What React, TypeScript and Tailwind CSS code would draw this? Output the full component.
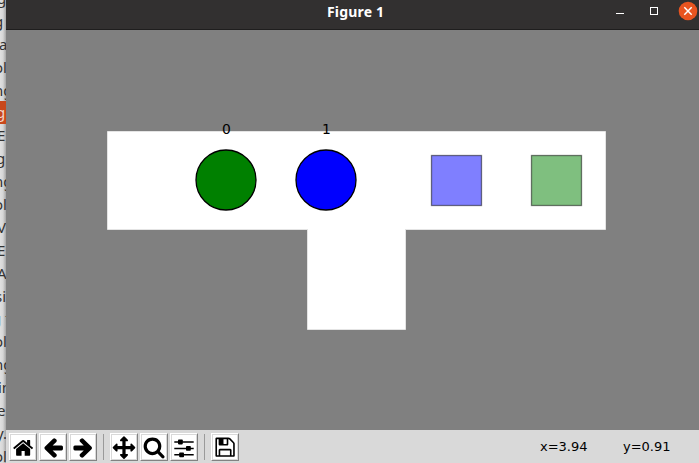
import React from "react";

const lines: { text: string; shift: string; hot?: boolean }[] = [
  { text: "g", shift: "-ml-[3px]" },
  { text: "g", shift: "-ml-[6px]" },
  { text: "a", shift: "-ml-[1px]" },
  { text: "ol", shift: "-ml-[6px]" },
  { text: "ng", shift: "-ml-[6px]" },
  { text: "g", shift: "-ml-[4px]", hot: true },
  { text: "E", shift: "-ml-[3px]" },
  { text: "g", shift: "-ml-[4px]" },
  { text: "ng", shift: "-ml-[6px]" },
  { text: "ol", shift: "-ml-[6px]" },
  { text: "V", shift: "-ml-[3px]" },
  { text: "E", shift: "-ml-[3px]" },
  { text: "A", shift: "-ml-[3px]" },
  { text: "si", shift: "-ml-[5px]" },
  { text: "g t", shift: "-ml-[8px]" },
  { text: "ol", shift: "-ml-[6px]" },
  { text: "ng", shift: "-ml-[6px]" },
  { text: "in", shift: "-ml-[2px]" },
  { text: "e", shift: "-ml-[3px]" },
  { text: "y.", shift: "-ml-[4px]" },
  { text: "ol", shift: "-ml-[6px]" },
];

function Background() {
  return (
    <div className="w-[6px] shrink-0 overflow-hidden bg-gradient-to-r from-[#e0e0e0] via-[#d6d6d6] to-[#a4a4a4] font-['Noto_Sans',sans-serif] text-[15px] leading-[22.9px] text-[#333]">
      <div className="-mt-[13px]">
        {lines.map((l, i) => (
          <div key={i} className={l.hot ? "h-[22.9px] bg-[#c9481b] text-[#f3d5ca]" : "h-[22.9px]"}>
            <span className={"block whitespace-nowrap " + l.shift}>{l.text}</span>
          </div>
        ))}
      </div>
    </div>
  );
}

function TitleBar() {
  return (
    <div className="flex h-[30px] shrink-0 border-b border-[#1f1e1e] bg-[#323030]">
      <div className="w-[321px] shrink-0" />
      <div className="w-[287px] shrink-0 pt-[2px] font-['Noto_Sans',sans-serif] text-[14px] leading-[20px] font-bold text-white">
        <svg className="block overflow-visible" width="58" height="20">
          <text x="0" y="15" textLength="57" fill="currentColor">Figure 1</text>
        </svg>
      </div>
      <svg className="block" width="85" height="29" fill="none" stroke="#fff">
        <path d="M2 13.5h8" />
        <rect x="36.5" y="7.5" width="7" height="7" />
        <circle cx="74" cy="11" r="9.3" fill="#e95420" stroke="none" />
        <path d="M70.3 7.3l7.4 7.4M77.7 7.3l-7.4 7.4" strokeWidth="1.5" />
      </svg>
    </div>
  );
}

function Plot() {
  return (
    <svg className="block shrink-0 bg-[#808080] font-['DejaVu_Sans',sans-serif] text-[13.9px]" width="693" height="400">
      <path d="M101.5 101.5H599.5V199.5H399.5V299.5H301.5V199.5H101.5Z" fill="#fff" stroke="#e4e4e4" />
      <g stroke="#000" strokeWidth="1.3">
        <circle cx="220" cy="150" r="30" fill="#008000" />
        <circle cx="320" cy="150" r="30" fill="#00f" />
      </g>
      <g stroke="#000" strokeWidth="1.3" strokeOpacity="0.5" fillOpacity="0.5">
        <rect x="425.5" y="125.5" width="50" height="50" fill="#00f" />
        <rect x="525.5" y="125.5" width="50" height="50" fill="#008000" />
      </g>
      <g textAnchor="middle">
        <text x="220.3" y="104">0</text>
        <text x="320.3" y="104">1</text>
      </g>
    </svg>
  );
}

function ToolButton({ children }: { children: React.ReactNode }) {
  return (
    <div className="h-[28px] w-[28px] shrink-0 border border-t-white border-r-[#828282] border-b-[#828282] border-l-white bg-white">
      <svg className="block border border-[#d9d9d9]" width="26" height="26" viewBox="1 1 24 24">{children}</svg>
    </div>
  );
}

function Separator() {
  return <div className="mt-px h-[26px] w-px shrink-0 bg-[#9a9a9a]" />;
}

function Toolbar() {
  return (
    <div className="flex h-[33px] shrink-0 bg-[#d9d9d9] pt-[3px] pl-[3px]">
      <div className="flex w-[94px] gap-[2px]">
        <ToolButton>
          <path transform="translate(2.2 2.9) scale(.0122)" d="M1472 992v480q0 26-19 45t-45 19h-384v-384h-256v384h-384q-26 0-45-19t-19-45v-480q0-1 .5-3t.5-3l575-474 575 474q1 2 1 6zm223-69l-62 74q-8 9-21 11h-3q-13 0-21-7l-692-577-692 577q-12 8-24 7-13-2-21-11l-62-74q-8-10-7-23.5t11-21.5l719-599q32-26 76-26t76 26l244 204v-195q0-14 9-23t23-9h192q14 0 23 9t9 23v408l219 182q10 8 11 21.5t-7 23.5z" />
        </ToolButton>
        <ToolButton>
          <path transform="translate(2 1.9) scale(.0126)" d="M1664 896v128q0 53-32.5 90.5t-84.5 37.5h-704l293 294q38 36 38 90t-38 90l-75 76q-37 37-90 37-52 0-91-37l-651-652q-37-37-37-90 0-52 37-91l651-650q38-38 91-38 52 0 90 38l75 74q38 38 38 91t-38 91l-293 293h704q52 0 84.5 37.5t32.5 90.5z" />
        </ToolButton>
        <ToolButton>
          <path transform="translate(1.8 1.9) scale(.0126)" d="M1600 960q0 54-37 91l-651 651q-39 37-91 37-51 0-90-37l-75-75q-38-38-38-91t38-91l293-293h-704q-52 0-84.5-37.5t-32.5-90.5v-128q0-53 32.5-90.5t84.5-37.5h704l-293-294q-38-36-38-90t38-90l75-75q38-38 90-38 53 0 91 38l651 651q37 35 37 90z" />
        </ToolButton>
      </div>
      <Separator />
      <div className="ml-[6px] flex w-[94px] gap-[2px]">
        <ToolButton>
          <path transform="translate(1.7 2.3) scale(.0126)" d="M1792 896q0 26-19 45l-256 256q-19 19-45 19t-45-19-19-45v-128h-384v384h128q26 0 45 19t19 45-19 45l-256 256q-19 19-45 19t-45-19l-256-256q-19-19-19-45t19-45 45-19h128v-384h-384v128q0 26-19 45t-45 19-45-19l-256-256q-19-19-19-45t19-45l256-256q19-19 45-19t45 19 19 45v128h384v-384h-128q-26 0-45-19t-19-45 19-45l256-256q19-19 45-19t45 19l256 256q19 19 19 45t-19 45-45 19h-128v384h384v-128q0-26 19-45t45-19 45 19l256 256q19 19 19 45z" />
        </ToolButton>
        <ToolButton>
          <path transform="translate(1.8 1.8) scale(.0126)" d="M1216 832q0-185-131.5-316.5t-316.5-131.5-316.5 131.5-131.5 316.5 131.5 316.5 316.5 131.5 316.5-131.5 131.5-316.5zm512 832q0 52-38 90t-90 38q-54 0-90-38l-343-342q-179 124-399 124-143 0-273.5-55.5t-225-150-150-225-55.5-273.5 55.5-273.5 150-225 225-150 273.5-55.5 273.5 55.5 225 150 150 225 55.5 273.5q0 220-124 399l343 343q37 37 37 90z" />
        </ToolButton>
        <ToolButton>
          <path d="M3.3 7.3h19.4v1.5H3.3zM3.3 13.7h19.4v1.5H3.3zM3.3 20.1h19.4v1.5H3.3z" />
          <rect x="7" y="5.6" width="4.8" height="4.8" rx=".8" />
          <rect x="15" y="12" width="4.8" height="4.8" rx=".8" />
          <rect x="8.2" y="18.4" width="4.8" height="4.8" rx=".8" />
        </ToolButton>
      </div>
      <Separator />
      <div className="ml-[6px]">
        <ToolButton>
          <path transform="translate(1.8 1.9) scale(.0126)" d="M512 1536h768v-384h-768v384zm896 0h128v-896q0-14-10-38.5t-20-34.5l-281-281q-10-10-34-20t-39-10v416q0 40-28 68t-68 28h-576q-40 0-68-28t-28-68v-416h-128v1280h128v-416q0-40 28-68t68-28h832q40 0 68 28t28 68v416zm-384-928v-320q0-13-9.5-22.5t-22.5-9.5h-192q-13 0-22.5 9.5t-9.5 22.5v320q0 13 9.5 22.5t22.5 9.5h192q13 0 22.5-9.5t9.5-22.5zm640 32v928q0 40-28 68t-68 28h-1344q-40 0-68-28t-28-68v-1344q0-40 28-68t68-28h928q40 0 88 20t76 48l280 280q28 28 48 76t20 88z" />
        </ToolButton>
      </div>
      <div className="ml-auto flex w-[159px] pt-[6px] font-['DejaVu_Sans',sans-serif] text-[13px] leading-[16px] whitespace-nowrap text-black">
        <span className="w-[83px]">x=3.94</span>
        <span>y=0.91</span>
      </div>
    </div>
  );
}

export default function App() {
  return (
    <div className="flex h-[463px] w-[699px] overflow-hidden">
      <Background />
      <div className="flex w-[693px] shrink-0 flex-col">
        <TitleBar />
        <Plot />
        <Toolbar />
      </div>
    </div>
  );
}
